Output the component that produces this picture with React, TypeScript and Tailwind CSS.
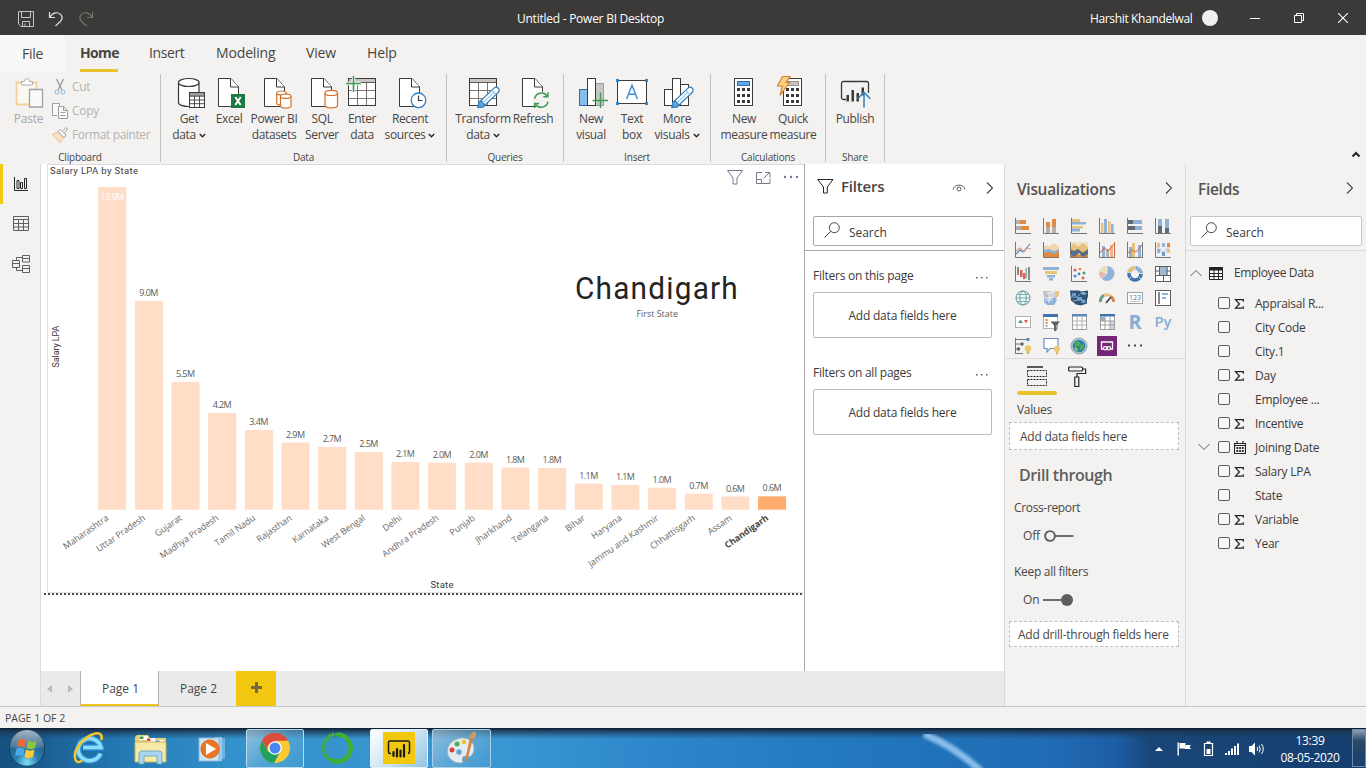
import React from "react";

const INK = "#3b3a39";
const BLUE = "#8fb2d9";
const ORANGE = "#e2883f";
const GREY = "#b3b0ad";
const SAND = "#e8c27a";

function B({ x, y, w, h, f }: { x: number; y: number; w: number; h: number; f: string }) {
  return <rect x={x} y={y} width={w} height={h} fill={f} />;
}

/* ---------- Ribbon icons ---------- */

function Glyph({ children }: { children?: React.ReactNode }) {
  return (
    <svg width="32" height="32" viewBox="0 0 32 32" fill="none" className="shrink-0 overflow-visible">
      {children}
    </svg>
  );
}

function Doc({ x }: { x: number }) {
  return (
    <g transform={`translate(${x} 0)`} stroke={INK} fill="#fff">
      <path d="M.5 2.5h12.5l7.5 8.5v19.5h-20z" />
      <path d="M12.5 2.5v8.5h8" />
    </g>
  );
}

function Cyl({ x, y, w, h, c, r }: { x: number; y: number; w: number; h: number; c: string; r: number }) {
  return (
    <g stroke={c} fill="#fff" strokeWidth="1.2">
      <path d={`M${x} ${y + r}v${h - 2 * r}a${w / 2} ${r} 0 0 0 ${w} 0v${-(h - 2 * r)}`} />
      <ellipse cx={x + w / 2} cy={y + r} rx={w / 2} ry={r} />
    </g>
  );
}

function Pencil() {
  return (
    <g transform="translate(11 31.5) rotate(-43.5)">
      <path d="M0 0l4-3h21a3 3 0 0 1 0 6H4z" fill="#fff" stroke="#2f7dbb" strokeWidth="1.2" />
      <path d="M0 0l4-3h3v6H4z" fill="#5ea3da" stroke="#2f7dbb" strokeWidth="1" />
      <path d="M7 0h15M22 -3v6" stroke="#8cc0e8" strokeWidth="1" />
    </g>
  );
}

function Grid({ x }: { x: number }) {
  return (
    <g transform={`translate(${x} 2.5)`}>
      <rect width="27" height="27" fill="#fff" />
      <rect width="27" height="4" fill="#c8c6c4" />
      <path d="M9 4v23M18 4v23M0 12h27M0 20h27" stroke="#797775" />
      <path d="M0 4h27" stroke={INK} strokeWidth=".8" />
      <rect width="27" height="27" stroke={INK} />
    </g>
  );
}

function Dots9() {
  return (
    <g fill={INK}>
      {[12, 18, 24].map((y) =>
        [9, 14, 19].map((x) => <rect key={`${x}-${y}`} x={x} y={y} width="3" height="3" />)
      )}
    </g>
  );
}

const GetDataIcon = (
  <Glyph>
    <Cyl x={5.5} y={2.5} w={20.5} h={28} c={INK} r={4} />
    <rect x="16.5" y="16.5" width="15" height="15" fill="#fff" stroke={INK} />
    <rect x="17" y="17" width="14" height="3" fill="#a19f9d" />
    <path d="M21.5 20v11M26.5 20v11M17 20.2h14M17 24h14M17 27.7h14" stroke={INK} strokeWidth=".9" />
  </Glyph>
);
const ExcelIcon = (
  <Glyph>
    <Doc x={5} />
    <rect x="18" y="18" width="14" height="14" fill="#1a7a43" />
    <path d="M22.3 21l5.4 8M27.7 21l-5.4 8" stroke="#fff" strokeWidth="1.9" />
  </Glyph>
);
const PbiDatasetIcon = (
  <Glyph>
    <Doc x={6} />
    <Cyl x={18.7} y={15} w={9.5} h={14} c="#d0712a" r={2} />
    <Cyl x={22.5} y={18} w={10.5} h={14} c="#d0712a" r={2.2} />
  </Glyph>
);
const SqlIcon = (
  <Glyph>
    <Doc x={5} />
    <Cyl x={19} y={14.3} w={12.5} h={17.5} c="#d0712a" r={2.6} />
  </Glyph>
);
const EnterIcon = (
  <Glyph>
    <Grid x={2.5} />
    <path d="M7.5 0v16M0 7.5h15" stroke="#f3f2f1" strokeWidth="3.5" />
    <path d="M7.5 0v16M0 7.5h15" stroke="#3f9a55" strokeWidth="1.5" />
  </Glyph>
);
const RecentIcon = (
  <Glyph>
    <Doc x={5} />
    <circle cx="24.5" cy="24.3" r="7.3" fill="#fff" stroke="#2b7cc0" strokeWidth="1.3" />
    <path d="M24.5 19.5v5h4" stroke={INK} strokeWidth="1.2" />
  </Glyph>
);
const TransformIcon = (
  <Glyph>
    <Grid x={2.5} />
    <Pencil />
  </Glyph>
);
const RefreshIcon = (
  <Glyph>
    <Doc x={5} />
    <circle cx="24.3" cy="24" r="8.6" fill="#f3f2f1" />
    <g stroke="#3f9a55" strokeWidth="1.5">
      <path d="M17.6 22.6a7 7 0 0 1 12.6-2.6M31 25.6a7 7 0 0 1-12.6 2.7" />
      <path d="M30.9 16.2v4.6h-4.6M17.6 32v-4.5h4.6" />
    </g>
  </Glyph>
);
const NewVisualIcon = (
  <Glyph>
    <rect x="4.5" y="13.5" width="8" height="16" fill="#83beec" stroke="#2f6ea8" />
    <rect x="20.5" y="7.5" width="8" height="22" fill="#c8c6c4" stroke="#a19f9d" />
    <rect x="12.5" y="2.5" width="8" height="27" fill="#fff" stroke={INK} />
    <path d="M25.5 16.5v15.5M17.5 24.5h15.5" stroke="#3f9a55" strokeWidth="1.4" />
  </Glyph>
);
const TextBoxIcon = (
  <Glyph>
    <rect x="1.5" y="4.5" width="29" height="23" fill="#fff" stroke={INK} />
    <g fill="#2b86cf">
      <rect x="0" y="3" width="3" height="3" /><rect x="29" y="3" width="3" height="3" />
      <rect x="0" y="26" width="3" height="3" /><rect x="29" y="26" width="3" height="3" />
    </g>
    <path d="M10.6 23L16 9.3 21.4 23M12.4 18.3h7.2" stroke="#3d8fd1" strokeWidth="1.5" />
  </Glyph>
);
const MoreVisualsIcon = (
  <Glyph>
    <g fill="#fff" stroke={INK}>
      <rect x="3.5" y="13.5" width="8" height="16" />
      <rect x="19.5" y="8.5" width="8" height="21" />
      <rect x="11.5" y="2.5" width="8" height="27" />
    </g>
    <Pencil />
  </Glyph>
);
const NewMeasureIcon = (
  <Glyph>
    <rect x="6.5" y="2.5" width="18" height="27" fill="#fff" stroke={INK} />
    <rect x="9.5" y="5.5" width="12" height="4" fill="#5ea9e6" stroke="#2f6ea8" />
    <Dots9 />
  </Glyph>
);
const QuickMeasureIcon = (
  <Glyph>
    <rect x="6.5" y="2.5" width="18" height="27" fill="#fff" stroke={INK} />
    <rect x="9.5" y="5.5" width="12" height="4" fill="#c8c6c4" stroke="#979593" />
    <Dots9 />
    <path d="M5.5.5h7.5l-4 6h3.5l-9.500 13 2.500-9.500h-5z" fill="#fcd28a" stroke="#d9822b" strokeWidth="1.2" />
  </Glyph>
);
const PublishIcon = (
  <Glyph>
    <path d="M7 23.5H4.500a2 2 0 0 1-2-2V7.500a2 2 0 0 1 2-2h23a2 2 0 0 1 2 2V17" stroke={INK} strokeWidth="1.3" />
    <g fill={INK}>
      <rect x="7.500" y="19" width="2.500" height="6.500" /><rect x="12.500" y="14" width="2.500" height="11.500" />
      <rect x="17.500" y="17" width="2.500" height="8.500" /><rect x="22.500" y="11.500" width="2.500" height="8" />
    </g>
    <path d="M25 31.500V17M18.600 22.800L25 16.400l6.400 6.400" stroke="#3583bf" strokeWidth="1.5" />
  </Glyph>
);

function Caret() {
  return (
    <svg width="7" height="5" viewBox="0 0 7 5" className="ml-[3px] inline-block" fill="none">
      <path d="M.8 1l2.700 2.700L6.200 1" stroke="#252423" strokeWidth="1.4" />
    </svg>
  );
}

function RibbonButton({ w, icon, a, b, caret }: { w: string; icon: React.ReactNode; a: string; b?: string; caret?: boolean }) {
  return (
    <div className={`flex shrink-0 flex-col items-center whitespace-nowrap text-[12px] leading-[16px] tracking-[-0.35px] text-[#484644] ${w}`}>
      {icon}
      <span className="mt-[3px]">{a}</span>
      {b && (
        <span>
          {b}
          {caret && <Caret />}
        </span>
      )}
    </div>
  );
}

function RibbonGroup({ w, label, pad, children }: { w: string; label: string; pad: string; children?: React.ReactNode }) {
  return (
    <div className={`flex h-[88px] shrink-0 flex-col border-r border-[#c3c1bf] ${w}`}>
      <div className={`flex h-[75px] shrink-0 pt-[2px] ${pad}`}>{children}</div>
      <div className="shrink-0 text-center text-[10px] leading-[16px] tracking-[-0.2px] text-[#484644]">{label}</div>
    </div>
  );
}

/* ---------- Title bar and ribbon ---------- */

function TitleBar() {
  return (
    <header className="flex h-[35px] shrink-0 items-center bg-[#3b3a38] text-[12px] text-white">
      <div className="flex w-[517px] items-center pt-[3px] pl-[18px]">
        <svg width="16" height="16" viewBox="0 0 16 16" fill="none" stroke="#c8c6c4">
          <path d="M.5.5h15v15H3l-2.500-2.500zM3.500.5v6h9v-6M4.500 15.500v-5h7v5M7 12.500v3" />
        </svg>
        <svg width="16" height="16" viewBox="0 0 16 16" fill="none" stroke="#e1dfdd" strokeWidth="1.2" className="ml-[14px]">
          <path d="M1.500 1v5.500H7M1.800 6.300C5 1 10 .8 12.500 3.300S14.300 8.500 12 10.800L7.500 15" />
        </svg>
        <svg width="16" height="16" viewBox="0 0 16 16" fill="none" stroke="#75736f" strokeWidth="1.2" className="ml-[14px]">
          <path d="M14.500 1v5.500H9M14.200 6.300C11 1 6 .8 3.500 3.300S1.700 8.500 4 10.800L8.500 15" />
        </svg>
      </div>
      <div className="w-[573px] pt-[2px] tracking-[-0.25px]">Untitled - Power BI Desktop</div>
      <div className="w-[112px] pt-[2px] tracking-[-0.35px]">Harshit Khandelwal</div>
      <div className="mt-px h-4 w-4 rounded-full bg-[#f0efee]" />
      <svg width="10" height="10" viewBox="0 0 10 10" stroke="#fff" className="mt-px ml-[32px]"><path d="M0 5.500h10" /></svg>
      <svg width="10" height="10" viewBox="0 0 10 10" fill="none" stroke="#fff" className="mt-px ml-[34px]">
        <path d="M.5 2.500h7v7h-7zM2.500 2.500v-2h7v7h-2" />
      </svg>
      <svg width="10" height="10" viewBox="0 0 10 10" stroke="#fff" strokeWidth="1.1" className="mt-px ml-[34px]">
        <path d="M0 0l10 10M10 0L0 10" />
      </svg>
    </header>
  );
}

function Ribbon() {
  return (
    <section className="h-[129px] shrink-0 bg-[#f3f2f1]">
      <nav className="flex h-[37px] text-[14px] leading-[18px] tracking-[-0.15px] text-[#484644]">
        <div className="w-[65px] bg-[#f8f8f8] pt-[10px] pl-[22px] tracking-[-0.3px]">File</div>
        <div className="ml-[15px] w-[38px] whitespace-nowrap border-b-[3px] border-[#eac32c] pt-[9px] font-bold tracking-[-0.65px] text-[#484644]">Home</div>
        <div className="w-[67px] pt-[9px] pl-[31px] tracking-[-0.4px]">Insert</div>
        <div className="w-[91px] pt-[9px] pl-[31px]">Modeling</div>
        <div className="w-[60px] pt-[9px] pl-[30px]">View</div>
        <div className="pt-[9px] pl-[31px]">Help</div>
      </nav>
      <div className="flex items-start pt-[2px]">
        <RibbonGroup w="w-[161px]" label="Clipboard" pad="">
          <div className="flex w-[51px] shrink-0 flex-col items-center pl-[6px] text-[12px] leading-[16px] tracking-[-0.25px] text-[#a9a7a5]">
            <Glyph>
              <path d="M3.500 6.500h20v22h-20z" fill="#fbf7f1" stroke="#f3cf9f" strokeWidth="1.8" />
              <path d="M8.500 9V5.500h3a2.500 2.500 0 0 1 5-.5v.5h3V9z" fill="#fff" stroke="#b0aeac" />
              <path d="M16.500 13.500h13v17.500h-13z" fill="#fafafa" stroke="#a3a19f" strokeWidth="1.3" />
            </Glyph>
            <span className="mt-[3px]">Paste</span>
          </div>
          <div className="-mt-px flex flex-col text-[12px] leading-[24px] tracking-[-0.3px] text-[#b5b3b1]">
            <div className="flex items-center">
              <svg width="18" height="18" viewBox="0 0 18 18" fill="none" stroke="#979593" className="mr-[3px]">
                <path d="M5.500 1l5.500 11M12.500 1L7 12" strokeWidth="1.2" />
                <circle cx="6" cy="14" r="1.9" stroke="#a8c9e3" strokeWidth="1.3" /><circle cx="12" cy="14" r="1.9" stroke="#a8c9e3" strokeWidth="1.3" />
              </svg>
              Cut
            </div>
            <div className="flex items-center">
              <svg width="18" height="18" viewBox="0 0 18 18" fill="#f9f9f9" stroke="#a09e9c" className="mr-[3px]">
                <path d="M6 13.500H1.500v-12h7v3" /><path d="M7.500 4.500h5l4 4v8h-9zM12.500 4.500v4h4M9.500 10.500h5M9.500 13.500h5" />
              </svg>
              Copy
            </div>
            <div className="flex items-center whitespace-nowrap">
              <svg width="18" height="18" viewBox="0 0 18 18" fill="none" stroke="#a09e9c" className="mr-[3px]">
                <path d="M1.500 8.500l5-2.500 6 5.500-3.500 5z" fill="#fbe0c0" stroke="#ecc294" />
                <path d="M7 5.500l2-2 6 5.500-2 2.500zM11.500 5.500l3.500-4 1.500 1.500-3 4" fill="#fff" />
              </svg>
              <span className="tracking-[-0.4px]">Format painter</span>
            </div>
          </div>
        </RibbonGroup>
        <RibbonGroup w="w-[286px]" label="Data" pad="pl-[8px]">
          <RibbonButton w="w-[40px]" icon={GetDataIcon} a="Get" b="data" caret />
          <RibbonButton w="w-[40px]" icon={ExcelIcon} a="Excel" />
          <RibbonButton w="w-[50px]" icon={PbiDatasetIcon} a="Power BI" b="datasets" />
          <RibbonButton w="w-[46px]" icon={SqlIcon} a="SQL" b="Server" />
          <RibbonButton w="w-[34px]" icon={EnterIcon} a="Enter" b="data" />
          <RibbonButton w="w-[62px]" icon={RecentIcon} a="Recent" b="sources" caret />
        </RibbonGroup>
        <RibbonGroup w="w-[117px]" label="Queries" pad="pl-[8px]">
          <RibbonButton w="w-[56px]" icon={TransformIcon} a="Transform" b="data" caret />
          <RibbonButton w="w-[44px]" icon={RefreshIcon} a="Refresh" />
        </RibbonGroup>
        <RibbonGroup w="w-[147px]" label="Insert" pad="pl-[8px]">
          <RibbonButton w="w-[38px]" icon={NewVisualIcon} a="New" b="visual" />
          <RibbonButton w="w-[44px]" icon={TextBoxIcon} a="Text" b="box" />
          <RibbonButton w="w-[46px]" icon={MoreVisualsIcon} a="More" b="visuals" caret />
        </RibbonGroup>
        <RibbonGroup w="w-[115px]" label="Calculations" pad="pl-[8px]">
          <RibbonButton w="w-[50px]" icon={NewMeasureIcon} a="New" b="measure" />
          <RibbonButton w="w-[48px]" icon={QuickMeasureIcon} a="Quick" b="measure" />
        </RibbonGroup>
        <RibbonGroup w="w-[59px]" label="Share" pad="pl-[6px]">
          <RibbonButton w="w-[46px]" icon={PublishIcon} a="Publish" />
        </RibbonGroup>
        <svg width="10" height="7" viewBox="0 0 10 7" fill="none" className="mt-[77px] mr-[5px] ml-auto">
          <path d="M1.500 5.500L5 2l3.500 3.500" stroke="#252423" strokeWidth="2" />
        </svg>
      </div>
    </section>
  );
}

/* ---------- Left rail ---------- */

function Rail() {
  return (
    <aside className="flex w-[41px] shrink-0 flex-col border-r border-[#dcdad8] bg-[#f3f2f1]">
      <div className="flex h-[40px] items-center border-l-[3px] border-[#f2c811] pl-[11px]">
        <svg width="14" height="14" viewBox="0 0 14 14" fill="none" stroke="#252423">
          <path d="M.5 0v13.500H14M3 11.500v-8h2v8zM6.500 11.500v-6h2v6zM10.500 11.500v-10h2v10z" />
        </svg>
      </div>
      <div className="flex h-[40px] items-center pb-px pl-[13px]">
        <svg width="16" height="15" viewBox="0 0 16 15" fill="none" stroke="#605e5c">
          <path d="M.5.5h15v14H.5zM.5 3.500h15M.5 7.500h15M.5 11h15M5.500 3.500v11M10.500 3.500v11" />
        </svg>
      </div>
      <div className="flex h-[40px] items-center pl-[12px]">
        <svg width="18" height="18" viewBox="0 0 18 18" fill="none" stroke="#605e5c">
          <path d="M.5 5.500h7v7h-7zM.5 8.500h7M10.500.5h7v6.500h-7zM10.500 3.500h7M10.500 10.500h7v7h-7zM10.500 13.500h7M4.500 5.500v-3h6M4.500 12.500v3h6" />
        </svg>
      </div>
    </aside>
  );
}

/* ---------- Chart ---------- */

const DATA: [string, string, number][] = [
  ["Maharashtra", "13.9M", 187],
  ["Uttar Pradesh", "9.0M", 301],
  ["Gujarat", "5.5M", 382],
  ["Madhya Pradesh", "4.2M", 413],
  ["Tamil Nadu", "3.4M", 430],
  ["Rajasthan", "2.9M", 442.5],
  ["Karnataka", "2.7M", 447],
  ["West Bengal", "2.5M", 452],
  ["Delhi", "2.1M", 462],
  ["Andhra Pradesh", "2.0M", 462.7],
  ["Punjab", "2.0M", 462.7],
  ["Jharkhand", "1.8M", 467.5],
  ["Telangana", "1.8M", 468],
  ["Bihar", "1.1M", 483.6],
  ["Haryana", "1.1M", 485],
  ["Jammu and Kashmir", "1.0M", 487.7],
  ["Chhattisgarh", "0.7M", 493.7],
  ["Assam", "0.6M", 496.5],
  ["Chandigarh", "0.6M", 496.3],
];

function Chart() {
  return (
    <svg width="763" height="507" viewBox="41 164 763 507" className="block bg-white font-['Open_Sans',sans-serif]">
      <path d="M47 164.500H804" stroke="#dddbd9" />
      <path d="M47.500 164v428.500H803" fill="none" stroke="#e3e3e3" />
      <path d="M44 594H803" stroke="#4a4a4a" strokeWidth="2" strokeDasharray="2 2" />
      <text x="50" y="174" fontSize="9.5" textLength="88" fill="#3b3a39" className="font-[Roboto,sans-serif]">Salary LPA by State</text>
      {DATA.map(([name, label, top], i) => {
        const x = 98.2 + i * 36.66;
        const last = i === DATA.length - 1;
        return (
          <g key={name}>
            <rect x={x} y={top} width="28" height={509.7 - top} fill={last ? "#ffab6e" : "#ffddc6"} />
            <text
              x={x + 14}
              y={i === 0 ? 200 : top - 5}
              fontSize="9"
              textAnchor="middle"
              textLength={i === 0 ? 24 : 19}
              fill={i === 0 ? "#fff" : "#5c5a58"}
            >
              {label}
            </text>
            <text
              transform={`translate(${x + 11} 519.5) rotate(-35)`}
              fontSize="9"
              textAnchor="end"
              letterSpacing="-0.1"
              fontWeight={last ? 700 : 400}
              fill={last ? "#484644" : "#6b6967"}
            >
              {name}
            </text>
          </g>
        );
      })}
      <text transform="translate(58.500 367.500) rotate(-90)" fontSize="9" textLength="42" fill="#3b3a39" className="font-[Roboto,sans-serif]">Salary LPA</text>
      <text x="430.500" y="588" fontSize="9.5" textLength="23" fill="#3b3a39" className="font-[Roboto,sans-serif]">State</text>
      <g transform="translate(575 299) scale(.93 1)">
        <text fontSize="32" textLength="175" fill="#252423" className="font-[Roboto,sans-serif]">Chandigarh</text>
      </g>
      <text x="636.500" y="317" fontSize="9" textLength="41.5" fill="#605e5c">First State</text>
      <g fill="none" stroke="#7d7390">
        <path d="M727.500 170.500h15l-5.500 7.500v6h-4v-6z" />
        <path d="M762 172.500h-5.500v11h13.500v-5M756.500 179.500h5v4M763.500 178.500l6-6M765 172.500h5v5" />
      </g>
      <g fill="#7d7390"><circle cx="785" cy="177" r="1.2" /><circle cx="791" cy="177" r="1.2" /><circle cx="797" cy="177" r="1.2" /></g>
    </svg>
  );
}

/* ---------- Panes ---------- */

function ChevronR() {
  return (
    <svg width="8" height="12" viewBox="0 0 8 12" fill="none" className="shrink-0">
      <path d="M1 .5L6.500 6 1 11.500" stroke="#484644" strokeWidth="1.1" />
    </svg>
  );
}

function SearchBox({ w }: { w: string }) {
  return (
    <div className={`flex h-[30px] items-center rounded-[2px] border bg-white pl-[10px] text-[12px] tracking-[-0.05px] text-[#3b3a39] ${w}`}>
      <svg width="16" height="16" viewBox="0 0 16 16" fill="none" stroke="#484644" className="mr-[9px] mb-[2px]">
        <circle cx="10.300" cy="5.700" r="5" /><path d="M6.700 9.300L.5 15.500" />
      </svg>
      <span className="pt-[4px]">Search</span>
    </div>
  );
}

function FilterSection({ title }: { title: string }) {
  return (
    <div className="h-[97px]">
      <div className="flex h-[17px] items-center justify-between pr-[14px] text-[12px] leading-[17px] tracking-[-0.25px] text-[#3b3a39]">
        {title}
        <svg width="12" height="2" viewBox="0 0 12 2" fill="#605e5c" className="mt-[5px] mr-[2px]">
          <rect width="1.500" height="1.500" x="0" /><rect width="1.500" height="1.500" x="5" /><rect width="1.500" height="1.500" x="10" />
        </svg>
      </div>
      <div className="mt-[8px] flex h-[46px] w-[179px] items-center justify-center rounded-[2px] border border-[#bdbbb9] pt-px text-[12px] tracking-[-0.2px] text-[#3b3a39]">
        Add data fields here
      </div>
    </div>
  );
}

function FiltersPane() {
  return (
    <aside className="flex w-[200px] shrink-0 flex-col border-l border-[#a6a6a6] bg-white">
      <div className="flex h-[87px] flex-col border-b border-[#a6a6a6]">
        <div className="flex h-[52px] items-center pl-[12px]">
          <svg width="17" height="15" viewBox="0 0 17 15" fill="none" stroke="#252423" className="mb-[7px]">
            <path d="M.7.500h15.300l-5.700 7.500v6h-3.800v-6z" />
          </svg>
          <span className="mb-[7px] ml-[7px] w-[111px] text-[15px] font-semibold tracking-[-0.2px] text-[#484644]">Filters</span>
          <svg width="14" height="10" viewBox="0 0 14 10" fill="none" stroke="#605e5c" className="mb-[4px]">
            <path d="M1 6.500a6.300 6.300 0 0 1 12 0" /><circle cx="7" cy="6" r="2" />
          </svg>
          <div className="mb-[4px] ml-[20px]"><ChevronR /></div>
        </div>
        <div className="pl-[8px]"><SearchBox w="w-[180px] border-[#a6a6a6]" /></div>
      </div>
      <div className="pt-[16px] pl-[8px]">
        <FilterSection title="Filters on this page" />
        <FilterSection title="Filters on all pages" />
      </div>
    </aside>
  );
}

const AX = <path d="M1.500 1v15.500H17" stroke="#797775" />;

const VIS: React.ReactNode[] = [
  <>{AX}<B x={2} y={3} w={5} h={4} f={GREY} /><B x={6} y={3} w={6} h={4} f={ORANGE} /><B x={2} y={9} w={6} h={4} f={GREY} /><B x={7} y={9} w={8} h={4} f={ORANGE} /></>,
  <>{AX}<B x={4} y={5} w={4} h={7} f={ORANGE} /><B x={4} y={10} w={4} h={6} f={GREY} /><B x={10} y={2} w={4} h={9} f={ORANGE} /><B x={10} y={10} w={4} h={6} f={GREY} /></>,
  <>{AX}<B x={2} y={2} w={8} h={3} f={SAND} /><B x={2} y={5} w={14} h={2.5} f={BLUE} /><B x={2} y={9} w={11} h={2.5} f={SAND} /><B x={2} y={11.5} w={8} h={3} f={BLUE} /></>,
  <>{AX}<B x={3} y={6} w={2.5} h={10} f={SAND} /><B x={6} y={2} w={3} h={14} f={BLUE} /><B x={10} y={4} w={2.5} h={12} f={SAND} /><B x={13} y={7} w={2.5} h={9} f={BLUE} /></>,
  <>{AX}<B x={2} y={3} w={6} h={4} f="#5f6a75" /><B x={7} y={3} w={9} h={4} f={BLUE} /><B x={2} y={9} w={8} h={4} f="#5f6a75" /><B x={9} y={9} w={7} h={4} f={BLUE} /></>,
  <>{AX}<B x={4} y={2} w={4} h={8} f={BLUE} /><B x={4} y={9} w={4} h={7} f="#5f6a75" /><B x={11} y={2} w={4} h={10} f={BLUE} /><B x={11} y={11} w={4} h={5} f="#5f6a75" /></>,
  <>{AX}<path d="M2 13l4-4 3 2 7-8" stroke="#4f86c0" strokeWidth="1.1" /><path d="M2 10l4-3 4 4 3-4 4 1" stroke="#d99a8a" strokeWidth="1.1" /></>,
  <>{AX}<path d="M2 4l5 1 5-3 5 3v6H2z" fill="#f2d7b4" /><path d="M2 9l5-1 5 2 5-2v8H2z" fill={BLUE} /><path d="M2 12l5-1 5 2 5-3v6H2z" fill={ORANGE} /></>,
  <><path d="M0 1h18v16H0z" fill="#efe1c5" /><path d="M0 6l4-4 4 4 5-4 5 4v6H0z" fill={SAND} /><path d="M0 12l4-2 5 4 5-4 4 2v5H0z" fill={ORANGE} /><path d="M0 8l4 2 4-2 5 4 5-4v5l-5 3-4-4-5 4-4-3z" fill="#566f88" /><path d="M.5 1v15.500H18" stroke="#797775" /></>,
  <>{AX}<B x={4} y={5} w={3} h={11} f={BLUE} /><B x={8} y={8} w={3} h={8} f={GREY} /><B x={12} y={4} w={3} h={12} f="#e8b49a" /><path d="M2 12l4-5 4 3 6-7" stroke="#d4663a" /><path d="M16.500 1v15.500" stroke="#d4663a" /></>,
  <>{AX}<B x={3} y={6} w={3} h={10} f={BLUE} /><B x={6} y={2} w={3} h={14} f={SAND} /><B x={12} y={4} w={3} h={12} f={BLUE} /><path d="M2 12l4-3 4 2 6-7" stroke="#d4663a" /><path d="M16.500 1v15.500" stroke="#797775" /></>,
  <>{AX}<path d="M3 5l6 7 7-7" stroke="#d8dfe8" strokeWidth="3" /><B x={3} y={2} w={3} h={4} f={SAND} /><B x={8} y={2} w={3} h={4} f={BLUE} /><B x={13} y={2} w={3} h={4} f={ORANGE} /><B x={3} y={8} w={3} h={4} f={BLUE} /><B x={8} y={11} w={3} h={4} f="#6f9ac8" /><B x={13} y={8} w={3} h={4} f={SAND} /></>,
  <>{AX}<B x={3} y={2} w={2} h={8} f="#8c8a88" /><B x={6} y={5} w={2.5} h={7} f="#d9605a" /><B x={9} y={8} w={2.5} h={6} f="#d9605a" /><B x={11.5} y={3} w={1.5} h={10} f="#7fae9b" /><B x={14} y={2} w={2} h={13} f="#8c8a88" /></>,
  <><B x={1} y={2} w={16} h={3} f={BLUE} /><B x={3} y={6} w={12} h={3} f={SAND} /><B x={5} y={10} w={8} h={2.5} f={BLUE} /><B x={7} y={13} w={4} h={2.5} f={BLUE} /></>,
  <>{AX}<g><circle cx="5" cy="5" r="1.5" fill="#d9605a" /><circle cx="10" cy="4" r="1.3" fill="#e2883f" /><circle cx="14" cy="8" r="1.5" fill="#4f9e77" /><circle cx="5" cy="11" r="1.5" fill="#4f86c0" /><circle cx="9" cy="9" r="1.4" fill="#4f86c0" /><circle cx="13" cy="13" r="1.4" fill="#d9605a" /></g></>,
  <><circle cx="9" cy="8.500" r="7.500" fill={BLUE} /><path d="M9 8.500V1a7.500 7.500 0 0 0-7 5z" fill="#f0dcb2" /><path d="M9 8.500L2 6a7.500 7.500 0 0 0 1.500 7.500z" fill="#e9b3a8" /><path d="M9 1v7.500L3.500 14M9 8.500L2 6" stroke="#f3f2f1" strokeWidth=".8" /></>,
  <><circle cx="9" cy="9" r="6" stroke="#3f74ad" strokeWidth="3.6" /><path d="M3.300 7.200A6 6 0 0 1 9 3" stroke={SAND} strokeWidth="3.6" /><path d="M9 3a6 6 0 0 1 6 5" stroke={BLUE} strokeWidth="3.6" /><path d="M9 0v5M13 8.500h5M2 15l3-3M13 12l3 3M0 7l5 1" stroke="#f3f2f1" strokeWidth=".8" /></>,
  <><rect x="1.500" y="1.500" width="15" height="15" fill="#fff" stroke="#605e5c" /><B x={5.5} y={2} w={8} h={8} f="#9fb9d6" /><path d="M5.500 1.500v9M1.500 10.500h15M13 1.500v9M13 6h3.500M9.500 10.500v6M1.500 6h4" stroke="#605e5c" /></>,
  <><circle cx="9" cy="9" r="7" fill="#f2f8f8" stroke="#5b8fa8" /><ellipse cx="9" cy="9" rx="3.2" ry="7" stroke="#6ca8a0" /><path d="M2 9h14M3 5.500h12M3 12.500h12" stroke="#6ca8a0" strokeWidth=".9" /></>,
  <><path d="M1 2h7l2 1v4l-3 2-5-1z" fill="#b9c0c8" /><path d="M9 3h5v5H8z" fill="#d3d6da" /><path d="M13 2h4v4l-2 3h-2z" fill="#e9c58f" /><path d="M2 9l6 1 5-2 2 3-3 5H5l-3-3z" fill={BLUE} /><path d="M4 4h7M3 11h8M7 3v11" stroke="#fff" strokeWidth=".8" /></>,
  <><path d="M0 1.500h9l2 1 7-1v6l-1 3v4l-6 2-5-1-5-4z" fill="#2f5478" /><path d="M2 4h4v3H2zM7 8h5v3H7zM12 11h4l-1 3h-4zM12 3h3v3h-3z" fill="#6d9cc9" /><path d="M1 8l6 0 4-4 6 1M3 12l6-1 5 0" stroke="#a9c3dc" strokeWidth=".8" /></>,
  <><path d="M2.500 13A7 7 0 0 1 6 6.300" stroke="#5fa17d" strokeWidth="3" /><path d="M6 6.300a7 7 0 0 1 7 1" stroke={SAND} strokeWidth="3" /><path d="M13 7.300a7 7 0 0 1 2.600 5.700" stroke="#d98a5a" strokeWidth="3" /><path d="M8 14l5-6" stroke={INK} strokeWidth="1.5" /></>,
  <><rect x="1.500" y="3.500" width="15" height="11" fill="#fff" stroke="#a19f9d" /><text x="9" y="11" fontSize="7" textAnchor="middle" textLength="12" fill="#3f74ad">123</text><path d="M4 12.500h10" stroke="#c8c6c4" /></>,
  <><rect x="1.500" y="1.500" width="15" height="15" fill="#fff" stroke="#605e5c" /><B x={4} y={3} w={2} h={12} f="#8c8a88" /><B x={8} y={4} w={6} h={2} f={BLUE} /><B x={8} y={8} w={4} h={2} f={BLUE} /></>,
  <><rect x="1.500" y="3.500" width="15" height="11" fill="#fff" stroke="#b3b0ad" /><path d="M4 10l2.500-3.500L9 10z" fill="#4f9e77" /><path d="M10 7l2 3.500L14 7z" fill="#d9605a" /></>,
  <><rect x="1.500" y="1.500" width="14" height="14" fill="#fff" stroke="#b3b0ad" /><B x={1} y={1} w={15} h={3} f="#3f74ad" /><B x={3.5} y={6} w={2} h={2} f={ORANGE} /><B x={3.5} y={9} w={2} h={2} f={ORANGE} /><B x={3.5} y={12} w={2} h={2} f={BLUE} /><path d="M8.500 8.500h9.500l-3.500 4V18h-2.400v-5.500z" fill="#605e5c" /></>,
  <><rect x="2.500" y="1.500" width="14" height="15" fill="#fff" stroke="#a19f9d" /><B x={2} y={1} w={15} h={2.5} f="#5b88b8" /><path d="M7 4v12M12 4v12M3 8h13M3 12h13" stroke="#b3b0ad" /></>,
  <><rect x="2.500" y="1.500" width="14" height="15" fill="#fff" stroke="#a19f9d" /><B x={2} y={1} w={15} h={2.5} f="#3f74ad" /><B x={3} y={4} w={4} h={4} f={BLUE} /><B x={12} y={8} w={4} h={8} f="#c9d8e8" /><path d="M7 4v12M12 4v12M3 8h13M3 12h13" stroke="#a19f9d" /></>,
  <text x="9" y="16" fontSize="19" fontWeight="700" textAnchor="middle" textLength="13" lengthAdjust="spacingAndGlyphs" fill="#86add6">R</text>,
  <text x="9" y="14" fontSize="14" fontWeight="600" textAnchor="middle" textLength="17" lengthAdjust="spacingAndGlyphs" fill="#86add6">Py</text>,
  <><path d="M1.500 1v15.500M1.500 2.500h12M1.500 7h7M1.500 12h4M1 16.500h8" stroke="#797775" /><circle cx="14" cy="2.500" r="1.7" fill="#4f86c0" /><circle cx="8" cy="7" r="1.7" fill="#605e5c" /><circle cx="4.500" cy="12" r="1.7" fill="#605e5c" /><circle cx="14" cy="11.500" r="3.2" fill="#edc869" /><B x={12.7} y={14} w={2.6} h={3} f="#d8b765" /></>,
  <><path d="M2 1.500h14v10H8l-3 3.500v-3.500H2z" fill="#fff" stroke="#6c93c0" strokeWidth="1.2" /><circle cx="15" cy="12" r="3" fill="#edc869" /><B x={13.8} y={14.5} w={2.4} h={3} f="#d8b765" /></>,
  <><circle cx="9" cy="9" r="8" fill="#b9c8cf" stroke="#8fa5b1" /><circle cx="9" cy="9" r="6.3" fill="#2a7fb5" /><path d="M4.500 5l4-1 2 3-3 3-3-1zM10 8l4-1-.5 5-3.500 1.500z" fill="#4fae4c" /><path d="M4 10l3 1 1 3.500-2-.5z" fill="#9fce5a" /></>,
  <><rect x="-1" y="-1" width="20" height="20" fill="#742774" /><path d="M5 12H3.500V5h11v7H13" stroke="#fff" strokeWidth="1.3" /><circle cx="7.200" cy="11.300" r="1.7" stroke="#fff" strokeWidth="1.2" /><circle cx="10.800" cy="11.300" r="1.7" stroke="#fff" strokeWidth="1.2" /></>,
  <g fill="#484644"><rect x="2" y="7.500" width="2" height="2" /><rect x="8" y="7.500" width="2" height="2" /><rect x="14" y="7.500" width="2" height="2" /></g>,
];

function VisualizationsPane() {
  return (
    <aside className="flex w-[181px] shrink-0 flex-col border-l border-[#dcdad8] bg-[#f3f2f1] text-[12px] text-[#484644]">
      <div className="flex h-[50px] shrink-0 items-center justify-between pr-[12px] pb-[2px] pl-[12px] text-[15.5px] leading-[20px] font-semibold tracking-[-0.3px] text-[#55534f]">
        <span className="pt-[2px]">Visualizations</span>
        <ChevronR />
      </div>
      <div className="grid h-[145px] shrink-0 auto-rows-[24px] grid-cols-[repeat(6,28px)] border-b border-[#dcdad8] pl-[4px]">
        {VIS.map((icon, i) => (
          <div key={i} className="flex items-center justify-center">
            <svg width="18" height="18" viewBox="0 0 18 18" fill="none" className="overflow-visible">
              {icon}
            </svg>
          </div>
        ))}
      </div>
      <div className="flex h-[32px] shrink-0 items-start pt-[7px] pl-[12px]">
        <svg width="20" height="20" viewBox="0 0 20 20" fill="none" stroke="#252423" className="ml-[10px]">
          <path d="M0 1h16" strokeWidth="1.5" />
          <path d="M.5 4.500h19v6H.5zM.5 13.500h19v6H.5z" strokeDasharray="2 1" />
        </svg>
        <svg width="20" height="22" viewBox="0 0 20 22" fill="none" stroke="#252423" strokeWidth="1.2" className="ml-[21px]">
          <rect x=".6" y="1" width="14" height="4" rx="1" /><path d="M14.600 3h3v4.500H9v3.500M6.800 11h4v9.500h-4z" />
        </svg>
      </div>
      <div className="ml-[12px] h-[4px] w-[40px] shrink-0 rounded-full bg-[#e9c32c]" />
      <div className="mt-[6px] ml-[12px] h-[18px] leading-[18px] tracking-[-0.3px]">Values</div>
      <div className="mt-[3px] ml-[4px] flex h-[28px] w-[170px] shrink-0 items-center border border-dashed border-[#c0bebc] bg-white pt-[2px] pl-[10px] tracking-[-0.25px]">Add data fields here</div>
      <div className="mt-[15px] ml-[14px] h-[20px] text-[16px] leading-[20px] font-semibold tracking-[-0.4px] text-[#605e5c]">Drill through</div>
      <div className="mt-[14px] ml-[9px] h-[18px] leading-[18px] tracking-[-0.35px]">Cross-report</div>
      <div className="mt-[10px] ml-[18px] flex h-[18px] items-center leading-[18px] tracking-[-0.2px]">
        Off
        <svg width="30" height="12" viewBox="0 0 30 12" fill="none" stroke="#605e5c" className="ml-[4px]">
          <circle cx="6" cy="6" r="4.9" strokeWidth="1.9" /><path d="M11 6h18.500" strokeWidth="1.8" />
        </svg>
      </div>
      <div className="mt-[18px] ml-[9px] h-[18px] leading-[18px] tracking-[-0.3px]">Keep all filters</div>
      <div className="mt-[10px] ml-[18px] flex h-[18px] items-center leading-[18px] tracking-[-0.2px]">
        On
        <svg width="30" height="12" viewBox="0 0 30 12" fill="none" className="ml-[4px]">
          <path d="M0 6h18" stroke="#605e5c" strokeWidth="1.8" /><circle cx="24" cy="6" r="6" fill="#605e5c" />
        </svg>
      </div>
      <div className="mt-[12px] ml-[4px] flex h-[26px] w-[170px] shrink-0 items-center border border-dashed border-[#c0bebc] bg-white pt-[2px] pl-[8px] whitespace-nowrap tracking-[-0.23px]">Add drill-through fields here</div>
    </aside>
  );
}

const FIELDS: [string, "sum" | "date" | ""][] = [
  ["Appraisal R...", "sum"],
  ["City Code", ""],
  ["City.1", ""],
  ["Day", "sum"],
  ["Employee ...", ""],
  ["Incentive", "sum"],
  ["Joining Date", "date"],
  ["Salary LPA", "sum"],
  ["State", ""],
  ["Variable", "sum"],
  ["Year", "sum"],
];

function FieldsPane() {
  return (
    <aside className="flex w-[181px] shrink-0 flex-col border-l border-[#dcdad8] bg-[#f3f2f1] text-[12px] text-[#3b3a39]">
      <div className="h-[87px] shrink-0 border-b border-[#dcdad8]">
        <div className="flex h-[52px] items-center justify-between pr-[12px] pb-[4px] pl-[12px] text-[15.5px] leading-[20px] font-semibold tracking-[-0.3px] text-[#55534f]">
          <span className="pt-[2px]">Fields</span>
          <ChevronR />
        </div>
        <div className="pl-[4px]"><SearchBox w="w-[172px] border-[#c8c6c4]" /></div>
      </div>
      <div className="mt-[10px] mb-[6px] flex h-[24px] shrink-0 items-center pl-[4px]">
        <svg width="12" height="8" viewBox="0 0 12 8" fill="none" stroke="#605e5c"><path d="M.5 7l5.500-5.500L11.500 7" /></svg>
        <svg width="14" height="13" viewBox="0 0 14 13" fill="#fff" stroke="#252423" className="mr-[11px] ml-[7px]">
          <path d="M.5.500h13v12H.500z" /><path d="M.500 1h13v2H.500zM.500 6.500h13M.500 9.500h13M5 3v9.500M9.500 3v9.500" fill="#252423" />
        </svg>
        <span className="tracking-[-0.35px]">Employee Data</span>
      </div>
      {FIELDS.map(([name, kind]) => (
        <div key={name} className="flex h-[24px] shrink-0 items-center pl-[12px] tracking-[-0.25px]">
          <div className="w-[20px]">
            {kind === "date" && (
              <svg width="12" height="8" viewBox="0 0 12 8" fill="none" stroke="#605e5c"><path d="M.5 1L6 6.500 11.500 1" /></svg>
            )}
          </div>
          <div className="h-[12px] w-[12px] rounded-[2px] border border-[#605e5c] bg-[#f8f7f6]" />
          <div className="flex w-[25px] pt-px pl-[4px]">
            {kind === "sum" && (
              <svg width="11" height="10" viewBox="0 0 11 10" fill="none" stroke="#252423" strokeWidth="1.2">
                <path d="M9.300 2.800V.700H1.500L5.500 5 1.500 9.200h7.800V7.200" />
              </svg>
            )}
            {kind === "date" && (
              <svg width="12" height="13" viewBox="0 0 12 13" fill="none" stroke="#252423">
                <path d="M.5 2.500h11v10H.500zM.500 4.500h11M3 0v3M9 0v3" strokeWidth="1.2" />
                <path d="M2.500 7h7.500M2.500 10h7.500" strokeWidth="1.8" strokeDasharray="1.7 1" />
              </svg>
            )}
          </div>
          <span className="pt-[2px]">{name}</span>
        </div>
      ))}
    </aside>
  );
}

/* ---------- Bottom bars ---------- */

function PageTabs() {
  return (
    <div className="flex h-[35px] shrink-0 bg-[#eaeaea] text-[12px] leading-[35px] text-[#484644]">
      <div className="flex w-[39px] items-center justify-between pr-[7px] pl-[6px]">
        <svg width="5" height="8" viewBox="0 0 5 8" fill="#bebcba"><path d="M5 0v8L0 4z" /></svg>
        <svg width="5" height="8" viewBox="0 0 5 8" fill="#bebcba"><path d="M0 0v8l5-4z" /></svg>
      </div>
      <div className="w-[79px] border-x border-b-2 border-x-[#b3b0ad] border-b-[#eec21a] bg-white pl-[2px] text-center">Page 1</div>
      <div className="w-[77px] pl-[2px] text-center">Page 2</div>
      <div className="flex w-[40px] items-center justify-center bg-[#f2c811]">
        <svg width="11" height="11" viewBox="0 0 11 11" className="mb-[2px]"><path d="M5.500 0v11M0 5.500h11" stroke="#756a45" strokeWidth="3" /></svg>
      </div>
    </div>
  );
}

function Taskbar() {
  return (
    <footer className="flex h-[40px] shrink-0 items-center bg-[linear-gradient(180deg,#0c1c2e_0,#1c334ccc_3px,#1a3c5c66_7px,transparent_11px),linear-gradient(90deg,#155080_0,#2479b2_120px,#3391cb_230px,#3894cf_360px,#3a97d3_500px,#2b84c9_680px,#2277bd_860px,#206bb4_1050px,#1d5ea6_1115px,#194678_1150px,#153e70_1366px)]">
      <svg width="54" height="40" viewBox="0 0 54 40" className="shrink-0">
        <defs>
          <radialGradient id="orb" cx=".5" cy=".9" r=".8"><stop offset="0" stopColor="#7fe0fa" /><stop offset=".4" stopColor="#2a7fae" /><stop offset="1" stopColor="#254f78" /></radialGradient>
          <linearGradient id="gloss" x1="0" y1="0" x2="0" y2="1"><stop offset="0" stopColor="#fff" stopOpacity=".6" /><stop offset="1" stopColor="#fff" stopOpacity=".1" /></linearGradient>
        </defs>
        <circle cx="27" cy="20.500" r="17.800" fill="url(#orb)" stroke="#16405f" />
        <path d="M10 19a17 17 0 0 1 34 0c-8 2-26 2-34 0z" fill="url(#gloss)" />
        <path d="M18.500 12c3-1.700 5-1.300 8 .2l-1.500 7.300c-3-1.500-5-1.700-8-.3z" fill="#e8683c" />
        <path d="M28 12.800c3 1.500 5.500 1.500 8.500 0L35 20c-3 1.500-5.500 1.500-8.500 0z" fill="#8cc63f" />
        <path d="M16.500 20.800c3-1.500 5-1.200 8 .2L23 28.500c-3-1.500-5-1.700-8-.3z" fill="#4aa8e8" />
        <path d="M26 21.500c3 1.500 5.500 1.500 8.500 0L33 29c-3 1.500-5.500 1.500-8.500 0z" fill="#fcc934" />
      </svg>
      <svg width="60" height="40" viewBox="0 0 60 40" fill="none" className="ml-[5px] shrink-0">
        <path d="M41.500 25.500A11.500 11 0 1 1 42 19.500H24" stroke="#2b9be2" strokeWidth="6" />
        <path d="M41.500 25.500A11.500 11 0 1 1 42 19.500H24" stroke="#8fdcf8" strokeWidth="3.5" />
        <path d="M42.500 12c1-4.500-1-7.500-6-6.500C27 7.500 12.500 21 16.500 32c1.500 3 4.500 2 7 .5" stroke="#f2c52f" strokeWidth="2.6" />
      </svg>
      <svg width="64" height="40" viewBox="0 0 64 40" className="shrink-0">
        <path d="M16 9l2-2h11l2 3h16v24H16z" fill="#e9cf7c" />
        <rect x="20" y="8" width="9" height="4" fill="#fff" /><rect x="20.500" y="8.500" width="4" height="2.500" fill="#43a047" />
        <rect x="28" y="10" width="8" height="4" fill="#fff" /><rect x="28" y="10.500" width="3.500" height="2.500" fill="#d84b37" />
        <rect x="37" y="12" width="8" height="4" fill="#fff" /><rect x="37" y="12.500" width="3.500" height="2.500" fill="#3c86d0" />
        <path d="M16 14h31v20H16z" fill="#f7e9a8" stroke="#cdb260" />
        <path d="M20 36V26a3 3 0 0 1 3-3h17a3 3 0 0 1 3 3v10h-5v-8H25v8z" fill="#a9d6ee" stroke="#5f9fc4" strokeWidth=".8" />
      </svg>
      <svg width="56" height="40" viewBox="0 0 56 40" className="shrink-0">
        <path d="M34 10h8v21h-8z" fill="#6fb2df" /><path d="M32 9h7v24h-7z" fill="#9bcaea" /><rect x="16" y="10" width="20" height="23" fill="#cde2f1" stroke="#86b6d8" />
        <circle cx="27" cy="21" r="9" fill="#ee7623" stroke="#d9640f" /><path d="M23 15l10 6-10 6z" fill="#fff" />
      </svg>
      <div className="ml-[7px] flex h-[39px] w-[58px] shrink-0 items-center justify-center rounded-[2px] border border-[#b5d9ee] bg-[linear-gradient(135deg,#cfe2ee99,#6db3dc88_50%,#54a5d655)]">
        <svg width="32" height="32" viewBox="0 0 32 32">
          <circle cx="16" cy="16" r="15" fill="#fbc934" />
          <path d="M16 16L3 8.500A15 15 0 0 1 29 8.500H16z" fill="#dd4b3e" />
          <path d="M16 16l-6.500 4L3 8.500A15 15 0 0 0 15 31l6-11z" fill="#22a062" />
          <path d="M3 8.500l6.500 11.300A7.500 7.500 0 0 1 16 8.500h13A15 15 0 0 0 3 8.500z" fill="#dd4b3e" />
          <circle cx="16" cy="16" r="6.800" fill="#fff" /><circle cx="16" cy="16" r="5.500" fill="#4688f1" />
        </svg>
      </div>
      <div className="flex w-[66px] shrink-0 items-center justify-center">
        <svg width="34" height="34" viewBox="0 0 34 34" fill="none" stroke="#3fb034">
          <path d="M17 3.500a13.500 13.500 0 1 1-6 25.500" strokeWidth="4.5" />
          <path d="M11 29A13.500 13.500 0 0 1 17 3.500" strokeWidth="3" strokeDasharray="4 .8" />
          <path d="M8.500 28A14.500 14.500 0 0 1 14 2.500" strokeWidth="2.5" strokeDasharray="2.5 1.8" />
        </svg>
      </div>
      <div className="flex h-[39px] w-[58px] shrink-0 items-center justify-center rounded-[2px] border border-[#e5f2fa] bg-[linear-gradient(135deg,#ffffff,#cfe5f2_50%,#8fc4e2)]">
        <svg width="32" height="32" viewBox="0 0 32 32" fill="none">
          <rect width="32" height="32" fill="#f2c811" />
          <path d="M8 21.500H7A1.500 1.500 0 0 1 5.500 20v-9.500A1.500 1.500 0 0 1 7 9h18a1.500 1.500 0 0 1 1.500 1.500V20a1.500 1.500 0 0 1-1.500 1.500" stroke="#1b1a19" strokeWidth="1.5" />
          <path d="M10.500 20v4M14 17v7.500M17.500 18.500v6M21 13v11.500" stroke="#1b1a19" strokeWidth="2.2" strokeLinecap="round" />
        </svg>
      </div>
      <div className="ml-[4px] flex h-[39px] w-[59px] shrink-0 items-center justify-center rounded-[2px] border border-[#a9d2ea] bg-[linear-gradient(135deg,#c8d9e499,#7bb5d888_50%,#4d9ed055)]">
        <svg width="34" height="36" viewBox="0 0 34 36">
          <path d="M3 25C0 15 9 8 18 8s13 8 10 15-8 1-10 4 2 6-3 6-10-3-12-8z" fill="#e3eaf0" stroke="#9fb5c6" />
          <circle cx="7" cy="20" r="2.500" fill="#d9453d" /><circle cx="12" cy="14" r="2.500" fill="#4fb04a" /><circle cx="19" cy="12" r="2.300" fill="#f0c330" /><circle cx="14" cy="22" r="2.700" fill="#59a6d4" />
          <path d="M28 8l-6 24-2-1 5-24z" fill="#d5853c" /><path d="M24 8c0-4 3-5 6-7 2 3 1 6-1.500 8z" fill="#c99a62" />
        </svg>
      </div>
      <svg width="170" height="40" viewBox="0 0 170 40" fill="none" className="ml-[409px] shrink-0">
        <defs><filter id="soft"><feGaussianBlur stdDeviation="1.4" /></filter><clipPath id="arc"><rect y="6" width="170" height="34" /></clipPath></defs>
        <path clipPath="url(#arc)" d="M24 6Q58 20 86 48" stroke="#9ccbf3" strokeWidth="7" filter="url(#soft)" opacity=".85" />
      </svg>
      <svg width="110" height="20" viewBox="0 0 110 20" fill="#fff" className="mt-[2px] ml-[84px] shrink-0">
        <path d="M1 12l4-4 4 4z" />
        <g>
          <path d="M23.500 3.500h1.400v13h-1.400zM25.500 4h6v5.500h-6zM32 6h5l-1.500 2L37 10h-6z" />
          <path d="M50.500 4.500h8v12h-8z" fill="none" stroke="#fff" strokeWidth="1.2" /><path d="M52.500 2.500h4v2h-4zM52.500 10h4v5h-4z" />
          <path d="M71 14h2v2h-2zM74 12h2v4h-2zM77 9.500h2v6.500h-2zM80 7h2v9h-2zM83 4.500h2v11.500h-2z" />
          <path d="M95 7h2.500L101 3.500v13L97.500 13H95z" /><path d="M103 8q1.500 2 0 4M105 6.500q2.500 3.500 0 7M107.500 5q3.500 5 0 10" fill="none" stroke="#fff" />
        </g>
      </svg>
      <div className="ml-[7px] w-[78px] shrink-0 pt-[2px] text-center text-[12px] leading-[17px] tracking-[-0.35px] text-white">
        13:39
        <br />
        08-05-2020
      </div>
      <div className="ml-auto h-[38px] w-[14px] border border-[#6c8aa8] bg-[linear-gradient(180deg,#8fa3b6,#2a4868_30%,#173f70)]" />
    </footer>
  );
}

export default function App() {
  return (
    <div className="flex h-[768px] w-[1366px] flex-col overflow-hidden bg-white font-['Open_Sans',sans-serif]">
      <TitleBar />
      <Ribbon />
      <main className="flex h-[543px] shrink-0 border-b border-[#c8c6c4]">
        <Rail />
        <div className="flex w-[963px] shrink-0 flex-col">
          <div className="flex h-[507px] shrink-0">
            <Chart />
            <FiltersPane />
          </div>
          <PageTabs />
        </div>
        <VisualizationsPane />
        <FieldsPane />
      </main>
      <div className="h-[21px] shrink-0 bg-[#f3f2f1] pl-[5px] text-[10.5px] leading-[22px] text-[#484644]">PAGE 1 OF 2</div>
      <Taskbar />
    </div>
  );
}
